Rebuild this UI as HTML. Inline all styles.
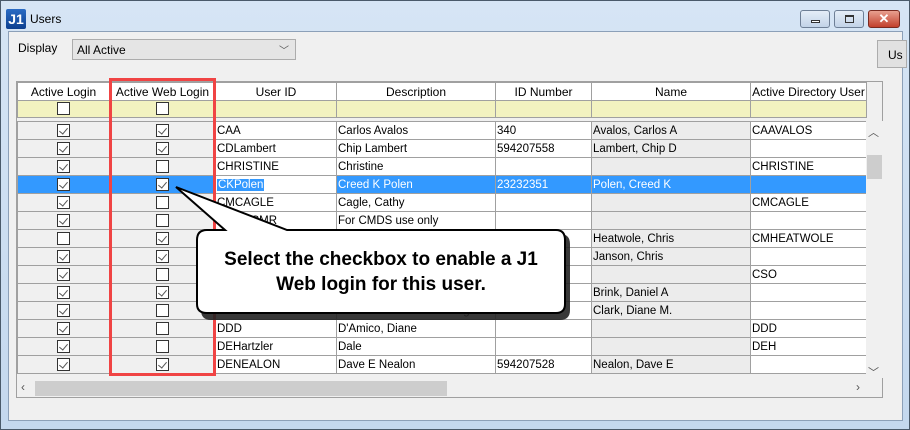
<!DOCTYPE html>
<html><head><meta charset="utf-8"><style>
*{box-sizing:border-box;margin:0;padding:0}
body{width:910px;height:430px;overflow:hidden;background:#bcd3ea;font-family:"Liberation Sans",sans-serif;font-size:12px;position:relative}
.frame{position:absolute;left:0;top:0;width:910px;height:430px;border:1px solid #4a5a6a;background:linear-gradient(#d6e5f5,#c4d8ee)}
.client{position:absolute;left:8px;top:31px;width:895px;height:390px;background:#f0f0f0;border:1px solid #8ca0b8}
.abs{position:absolute}
table{border-collapse:collapse;table-layout:fixed;position:absolute}
td{border:1px solid #a0a0a0;height:18px;padding:0 1px;white-space:nowrap;overflow:hidden;font-size:11.5px;line-height:16px}
td.g{background:#f0f0f0;text-align:center}
td.w{background:#fff}
td.n{background:#ececec}
tr.sel td{background:#3399ff;color:#fff}
tr.sel td.u{background:#fff}
tr.sel td.u span{background:#3399ff;color:#fff;padding:0 1px}
.cb{display:inline-block;width:13px;height:13px;border:1px solid #333;background:#fff;vertical-align:middle;position:relative}
.cb.c::after{content:"";position:absolute;left:3px;top:1px;width:4px;height:7px;border:solid #555;border-width:0 1px 1px 0;transform:rotate(40deg)}
.hd td{background:#fff;text-align:center;height:18px;border-color:#a0a0a0;font-size:12px}
.ft td{background:#f2f2c0;text-align:center;height:17px}
</style></head><body>
<div class="frame"></div>
<div class="abs" style="left:6px;top:9px;width:20px;height:20px;background:linear-gradient(#2a6bc4,#0d3f8f);color:#fff;font-weight:bold;font-size:14px;line-height:20px;text-align:center;border-radius:2px">J1</div>
<div class="abs" style="left:30px;top:12px;font-size:12px">Users</div>
<div class="abs" style="left:800px;top:10px;width:30px;height:18px;border:1px solid #6e7f96;border-radius:3px;background:linear-gradient(#e4edf8,#c2d3e8)"><div class="abs" style="left:10px;top:9px;width:9px;height:3px;border:1px solid #333;background:#fff"></div></div>
<div class="abs" style="left:834px;top:10px;width:30px;height:18px;border:1px solid #6e7f96;border-radius:3px;background:linear-gradient(#e4edf8,#c2d3e8)"><div class="abs" style="left:10px;top:4px;width:9px;height:8px;border:1px solid #333;border-top-width:2px"></div></div>
<div class="abs" style="left:868px;top:10px;width:32px;height:18px;border:1px solid #7a2a20;border-radius:3px;background:linear-gradient(#e8a090,#c2402c);color:#fff;font-weight:bold;text-align:center;line-height:16px;font-size:13px">✕</div>
<div class="client"></div>
<div class="abs" style="left:18px;top:41px">Display</div>
<div class="abs" style="left:72px;top:39px;width:224px;height:21px;border:1px solid #acacac;background:#e5e5e5;padding:3px 4px">All Active<span style="position:absolute;right:6px;top:2px;font-size:10px;color:#555">﹀</span></div>
<div class="abs" style="left:877px;top:40px;width:30px;height:28px;border:1px solid #acacac;background:#e1e1e1;padding:7px 0 0 10px">Us</div>
<div class="abs" style="left:16px;top:81px;width:867px;height:317px;border:1px solid #a0a0a0;background:#f0f0f0"></div>
<table style="left:17px;top:82px">
<colgroup><col style="width:92px"><col style="width:106px"><col style="width:121px"><col style="width:159px"><col style="width:96px"><col style="width:159px"><col style="width:116px"></colgroup>
<tr class="hd"><td>Active Login</td><td>Active Web Login</td><td>User ID</td><td>Description</td><td>ID Number</td><td>Name</td><td>Active Directory User</td></tr>
<tr class="ft"><td><span class="cb"></span></td><td><span class="cb"></span></td><td></td><td></td><td></td><td></td><td></td></tr>
</table>
<table style="left:17px;top:121px">
<colgroup><col style="width:92px"><col style="width:106px"><col style="width:121px"><col style="width:159px"><col style="width:96px"><col style="width:159px"><col style="width:116px"></colgroup>
<tr><td class="g"><span class="cb c"></span></td><td class="g"><span class="cb c"></span></td><td class="w">CAA</td><td class="w">Carlos Avalos</td><td class="w">340</td><td class="n">Avalos, Carlos A</td><td class="w">CAAVALOS</td></tr>
<tr><td class="g"><span class="cb c"></span></td><td class="g"><span class="cb c"></span></td><td class="w">CDLambert</td><td class="w">Chip Lambert</td><td class="w">594207558</td><td class="n">Lambert, Chip D</td><td class="w"></td></tr>
<tr><td class="g"><span class="cb c"></span></td><td class="g"><span class="cb"></span></td><td class="w">CHRISTINE</td><td class="w">Christine</td><td class="w"></td><td class="n"></td><td class="w">CHRISTINE</td></tr>
<tr class="sel"><td class="g"><span class="cb c"></span></td><td class="g"><span class="cb c"></span></td><td class="w u"><span>CKPolen</span></td><td class="w">Creed K Polen</td><td class="w">23232351</td><td class="n">Polen, Creed K</td><td class="w"></td></tr>
<tr><td class="g"><span class="cb c"></span></td><td class="g"><span class="cb"></span></td><td class="w">CMCAGLE</td><td class="w">Cagle, Cathy</td><td class="w"></td><td class="n"></td><td class="w">CMCAGLE</td></tr>
<tr><td class="g"><span class="cb c"></span></td><td class="g"><span class="cb"></span></td><td class="w">CMDSCMR</td><td class="w">For CMDS use only</td><td class="w"></td><td class="n"></td><td class="w"></td></tr>
<tr><td class="g"><span class="cb"></span></td><td class="g"><span class="cb c"></span></td><td class="w">CMHeatwole</td><td class="w">Chris Heatwole</td><td class="w"></td><td class="n">Heatwole, Chris</td><td class="w">CMHEATWOLE</td></tr>
<tr><td class="g"><span class="cb c"></span></td><td class="g"><span class="cb c"></span></td><td class="w">CSJanson</td><td class="w">Chris Janson</td><td class="w"></td><td class="n">Janson, Chris</td><td class="w"></td></tr>
<tr><td class="g"><span class="cb c"></span></td><td class="g"><span class="cb"></span></td><td class="w">CSO</td><td class="w">CSO</td><td class="w"></td><td class="n"></td><td class="w">CSO</td></tr>
<tr><td class="g"><span class="cb c"></span></td><td class="g"><span class="cb c"></span></td><td class="w">DABrink</td><td class="w">Daniel Brink</td><td class="w"></td><td class="n">Brink, Daniel A</td><td class="w"></td></tr>
<tr><td class="g"><span class="cb c"></span></td><td class="g"><span class="cb"></span></td><td class="w">DCLARK</td><td class="w">Diane Clark - Hire test login</td><td class="w">48</td><td class="n">Clark, Diane M.</td><td class="w"></td></tr>
<tr><td class="g"><span class="cb c"></span></td><td class="g"><span class="cb"></span></td><td class="w">DDD</td><td class="w">D'Amico, Diane</td><td class="w"></td><td class="n"></td><td class="w">DDD</td></tr>
<tr><td class="g"><span class="cb c"></span></td><td class="g"><span class="cb"></span></td><td class="w">DEHartzler</td><td class="w">Dale</td><td class="w"></td><td class="n"></td><td class="w">DEH</td></tr>
<tr><td class="g"><span class="cb c"></span></td><td class="g"><span class="cb c"></span></td><td class="w">DENEALON</td><td class="w">Dave E Nealon</td><td class="w">594207528</td><td class="n">Nealon, Dave E</td><td class="w"></td></tr>
</table>
<div class="abs" style="left:866px;top:121px;width:17px;height:257px;background:#f0f0f0"></div>
<div class="abs" style="left:868px;top:124px;font-size:11px;color:#555">︿</div>
<div class="abs" style="left:867px;top:155px;width:15px;height:24px;background:#cdcdcd"></div>
<div class="abs" style="left:868px;top:364px;font-size:11px;color:#555">﹀</div>
<div class="abs" style="left:17px;top:378px;width:849px;height:19px;background:#f0f0f0"></div>
<div class="abs" style="left:35px;top:381px;width:412px;height:15px;background:#cdcdcd"></div>
<div class="abs" style="left:21px;top:380px;color:#555">‹</div>
<div class="abs" style="left:856px;top:380px;color:#555">›</div>
<div class="abs" style="left:109px;top:78px;width:107px;height:298px;border:3px solid #f04444"></div>
<svg class="abs" style="left:0;top:0" width="910" height="430">
<path d="M203 236 Q200 232 208 230 L225 230 L178 188 L287 230 L556 230 Q566 230 566 240 L566 306 Q566 316 556 316 L207 316 Q197 316 197 306 L197 240 Z" fill="#222" transform="translate(4,4)" opacity="0.9"/>
<path d="M207 230 L225 230 L176 187 L287 230 L556 230 Q565 230 565 240 L565 304 Q565 313 556 313 L207 313 Q197 313 197 304 L197 240 Q197 230 207 230 Z" fill="#fff" stroke="#000" stroke-width="2"/>
<text x="381" y="265" text-anchor="middle" font-family="Liberation Sans" font-weight="bold" font-size="19">Select the checkbox to enable a J1</text>
<text x="381" y="290" text-anchor="middle" font-family="Liberation Sans" font-weight="bold" font-size="19">Web login for this user.</text>
</svg>
</body></html>
